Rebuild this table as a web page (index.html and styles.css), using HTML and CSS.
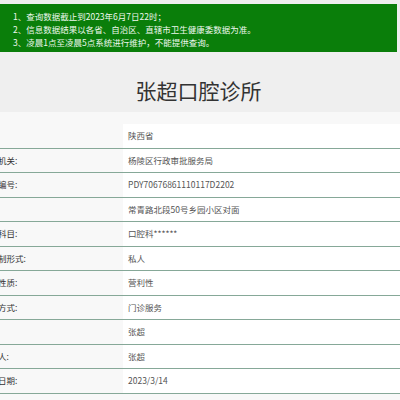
FILE: index.html
```html
<!DOCTYPE html>
<html lang="zh-CN">
<head>
<meta charset="utf-8">
<title>张超口腔诊所</title>
<link rel="stylesheet" href="styles.css">
</head>
<body>
<div class="notice">
  <p>1、查询数据截止到2023年6月7日22时；</p>
  <p>2、信息数据结果以各省、自治区、直辖市卫生健康委数据为准。</p>
  <p>3、凌晨1点至凌晨5点系统进行维护，不能提供查询。</p>
</div>
<h1 class="title">张超口腔诊所</h1>
<div class="section">
  <div class="table">
    <div class="row"><div class="label">省份</div><div class="value">陕西省</div></div>
    <div class="row"><div class="label">发证机关:</div><div class="value">杨陵区行政审批服务局</div></div>
    <div class="row"><div class="label">登记编号:</div><div class="value">PDY70676861110117D2202</div></div>
    <div class="row"><div class="label">地址</div><div class="value">常青路北段50号乡园小区对面</div></div>
    <div class="row"><div class="label">诊疗科目:</div><div class="value">口腔科******</div></div>
    <div class="row"><div class="label">所有制形式:</div><div class="value">私人</div></div>
    <div class="row"><div class="label">经营性质:</div><div class="value">营利性</div></div>
    <div class="row"><div class="label">服务方式:</div><div class="value">门诊服务</div></div>
    <div class="row"><div class="label">法人</div><div class="value">张超</div></div>
    <div class="row"><div class="label">负责人:</div><div class="value">张超</div></div>
    <div class="row"><div class="label">发证日期:</div><div class="value">2023/3/14</div></div>
  </div>
</div>
</body>
</html>
```
FILE: styles.css
```css
html, body {
  margin: 0;
  padding: 0;
}
body {
  background: #efefef;
  font-family: "Noto Sans CJK SC", "Noto Sans", sans-serif;
  overflow: hidden;
}
.notice {
  margin: 4px 3px 0 0;
  background: #0a7e0a;
  color: #eef8ee;
  padding: 5.5px 0 3.5px 13px;
  font-size: 8.5px;
  line-height: 13px;
}
.notice p {
  margin: 0;
  white-space: nowrap;
}
.title {
  margin: 0 3px 0 0;
  padding: 24px 0 8px;
  text-align: center;
  font-size: 21px;
  line-height: 28px;
  font-weight: normal;
  color: #333;
}
.section {
  background: #f8f8f8;
  padding-top: 12px;
  padding-bottom: 8px;
}
.table {
  display: flex;
  flex-direction: column;
}
.row {
  display: grid;
  grid-template-columns: 123px 1fr;
  height: 23.5px;
  border-bottom: 1px solid #86a898;
  font-size: 8.5px;
  line-height: 23.5px;
}
.label {
  background: #f8f8f8;
  color: #333;
  text-indent: -19px;
  white-space: nowrap;
  overflow: hidden;
}
.value {
  background: #fff;
  color: #555;
  padding-left: 5px;
  white-space: nowrap;
}
```
